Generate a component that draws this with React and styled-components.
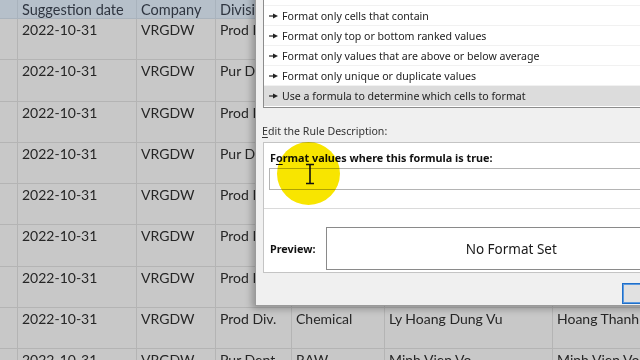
import React from "react"
import styled, {createGlobalStyle} from "styled-components"

const GlobalStyle = createGlobalStyle`
  html, body {
    margin: 0;
    padding: 0;
    width: 640px;
    height: 360px;
    overflow: hidden;
    background: #c8c8c8;
  }
`

const columns = [
  {w: 18, title: ""},
  {w: 119, title: "Suggestion date"},
  {w: 79, title: "Company"},
  {w: 76, title: "Division"},
  {w: 93, title: "Group"},
  {w: 168, title: "Requester"},
  {w: 120, title: "Approver"},
]

const rows = [
  ["", "2022-10-31", "VRGDW", "Prod Div.", "Chemical", "Ly Hoang Dung Vu", "Hoang Thanh Tam"],
  ["", "2022-10-31", "VRGDW", "Pur Dept", "RAW", "Minh Vien Vo", "Minh Vien Vo"],
  ["", "2022-10-31", "VRGDW", "Prod Div.", "Chemical", "Ly Hoang Dung Vu", "Hoang Thanh Tam"],
  ["", "2022-10-31", "VRGDW", "Pur Dept", "RAW", "Minh Vien Vo", "Minh Vien Vo"],
  ["", "2022-10-31", "VRGDW", "Prod Div.", "Chemical", "Ly Hoang Dung Vu", "Hoang Thanh Tam"],
  ["", "2022-10-31", "VRGDW", "Prod Div.", "Chemical", "Ly Hoang Dung Vu", "Hoang Thanh Tam"],
  ["", "2022-10-31", "VRGDW", "Prod Div.", "Chemical", "Ly Hoang Dung Vu", "Hoang Thanh Tam"],
  ["", "2022-10-31", "VRGDW", "Prod Div.", "Chemical", "Ly Hoang Dung Vu", "Hoang Thanh"],
  ["", "2022-10-31", "VRGDW", "Pur Dept", "RAW", "Minh Vien Vo", "Minh Vien Vo"],
]

const ruleTypes = [
  "Format all cells based on their values",
  "Format only cells that contain",
  "Format only top or bottom ranked values",
  "Format only values that are above or below average",
  "Format only unique or duplicate values",
  "Use a formula to determine which cells to format",
]

export default function App () {
  return (
    <Screen>
      <GlobalStyle />
      <Sheet>
        <Row header>
          {columns.map((c, i) => (
            <Cell key = {i} width = {c.w} header>{c.title}</Cell>
          ))}
        </Row>
        {rows.map((r, ri) => (
          <Row key = {ri}>
            {r.map((v, ci) => (
              <Cell key = {ci} width = {columns[ci].w}>{v}</Cell>
            ))}
          </Row>
        ))}
      </Sheet>

      <Dialog>
        <RuleList>
          {ruleTypes.map((t, i) => (
            <RuleItem key = {i} selected = {i === ruleTypes.length - 1}>
              <svg width = "9" height = "6" viewBox = "0 0 9 6">
                <path d = "M0 3H5" stroke = "#222" strokeWidth = "1.2" />
                <path d = "M4 0.5L9 3L4 5.5Z" fill = "#222" />
              </svg>
              <span>{t}</span>
            </RuleItem>
          ))}
        </RuleList>

        <SectionLabel><u>E</u>dit the Rule Description:</SectionLabel>

        <RulePanel>
          <BoldLabel>F<u>o</u>rmat values where this formula is true:</BoldLabel>
          <FormulaInput />
          <Separator />
          <PreviewRow>
            <BoldLabel>Preview:</BoldLabel>
            <PreviewBox>No Format Set</PreviewBox>
          </PreviewRow>
        </RulePanel>

        <ButtonRow>
          <FormatButton />
        </ButtonRow>
      </Dialog>

      <Highlight>
        <svg width = "12" height = "22" viewBox = "0 0 12 22">
          <path d = "M2 1.5H10M6 1.5V20.5M2 20.5H10" stroke = "#111" strokeWidth = "1.6" fill = "none" />
        </svg>
      </Highlight>
    </Screen>
  )
}

const Screen = styled.div`
  position: relative;
  width: 640px;
  height: 360px;
  overflow: hidden;
  background: #c8c8c8;
`

const Sheet = styled.div`
  display: flex;
  flex-direction: column;
  font-family: Lato, "Liberation Sans", sans-serif;
  font-size: 14px;
  color: #262626;
`

const Row = styled.div`
  display: flex;
  flex: none;
  height: ${props => props.header ? "19px" : "41.3px"};
  background: ${props => props.header ? "#b6c0ca" : "#c8c8c8"};
`

const Cell = styled.div`
  flex: none;
  box-sizing: border-box;
  width: ${props => props.width}px;
  padding: ${props => props.header ? "0 4px" : "1px 4px 0"};
  line-height: ${props => props.header ? "19px" : "20px"};
  font-size: ${props => props.header ? "14.5px" : "14px"};
  border-right: 1px solid ${props => props.header ? "#a9b3bd" : "#b4b4b4"};
  border-bottom: 1px solid ${props => props.header ? "#a9b3bd" : "#b4b4b4"};
  white-space: nowrap;
  overflow: hidden;
  color: ${props => props.header ? "#2f3540" : "#262626"};
`

const Dialog = styled.div`
  position: absolute;
  left: 255px;
  top: -30px;
  width: 440px;
  height: 336px;
  box-sizing: border-box;
  padding: 15px 0 0 7px;
  display: flex;
  flex-direction: column;
  background: #f0f0f0;
  border-left: 1px solid #9a9a9a;
  border-bottom: 1px solid #9a9a9a;
  box-shadow: -3px 3px 7px rgba(0, 0, 0, 0.28);
  font-family: "Noto Sans", "Open Sans", sans-serif;
  font-size: 10.6px;
  color: #222;
`

const RuleList = styled.div`
  display: flex;
  flex-direction: column;
  background: #fff;
  border: 1px solid #8c8c8c;
  border-right: none;
  padding-bottom: 1px;
`

const RuleItem = styled.div`
  display: flex;
  align-items: center;
  gap: 4px;
  height: 20px;
  padding-left: 5px;
  box-sizing: border-box;
  border-bottom: 1px solid ${props => props.selected ? "transparent" : "#f1f1f1"};
  background: ${props => props.selected ? "#dcdcdc" : "#fff"};

  svg {
    flex: none;
  }
`

const SectionLabel = styled.div`
  margin-top: 15px;
  margin-left: -1px;
  line-height: 16px;
  color: #333;

  u {
    text-decoration-thickness: 1px;
    text-underline-offset: 2px;
  }
`

const RulePanel = styled.div`
  margin-top: 3px;
  height: 131px;
  box-sizing: border-box;
  display: flex;
  flex-direction: column;
  background: #fff;
  border: 1px solid #c4c4c4;
  border-right: none;
`

const BoldLabel = styled.div`
  font-weight: 700;
  font-size: 10.8px;
  line-height: 16px;
  margin: 7px 0 0 6px;
  color: #111;
  white-space: nowrap;

  u {
    text-decoration-thickness: 1px;
    text-underline-offset: 2px;
  }
`

const FormulaInput = styled.div`
  margin: 2px 0 0 5px;
  height: 22px;
  box-sizing: border-box;
  border: 1px solid #b4b4b4;
  border-right: none;
  background: #fff;
`

const Separator = styled.div`
  margin-top: 18px;
  height: 1px;
  background: #dadada;
`

const PreviewRow = styled.div`
  display: flex;
  align-items: center;
  margin-top: 18px;
  gap: 11px;

  ${BoldLabel} {
    margin: 0 0 0 6px;
  }
`

const PreviewBox = styled.div`
  flex: 1;
  height: 43px;
  display: flex;
  align-items: center;
  justify-content: center;
  box-sizing: border-box;
  border: 1px solid #8a8a8a;
  border-right: none;
  background: #fff;
  font-size: 13.5px;
  color: #1a1a1a;
`

const ButtonRow = styled.div`
  display: flex;
  justify-content: flex-end;
  margin-top: 10px;
`

const FormatButton = styled.div`
  width: 56px;
  height: 21px;
  margin-right: 17px;
  box-sizing: border-box;
  border: 1px solid #1f6fc9;
  box-shadow: inset 0 0 0 1px #5c9ae0;
  background: #e1e1e1;
`

const Highlight = styled.div`
  position: absolute;
  left: 277px;
  top: 142px;
  width: 63px;
  height: 63px;
  border-radius: 50%;
  background: #f8e500;
  display: flex;
  align-items: center;
  justify-content: center;
  mix-blend-mode: multiply;

  svg {
    margin-left: 2px;
    margin-top: 1px;
  }
`
